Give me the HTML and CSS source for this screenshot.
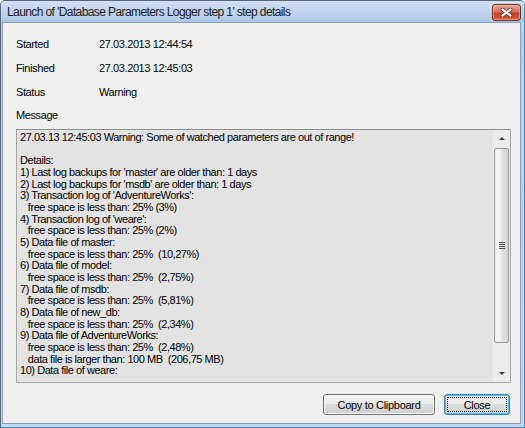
FILE: index.html
```html
<!DOCTYPE html>
<html lang="en">
<head>
    <meta charset="UTF-8">
    <title>Step details</title>
    <link rel="stylesheet" href="styles.css">
</head>
<body>
    <div class="window">
        <div class="titlebar">
            <span class="title">Launch of 'Database Parameters Logger step 1' step details</span>
            <button class="close-x" aria-label="Close">
                <svg width="13" height="9" viewBox="0 0 13 9">
                    <path d="M2.5 1.5 L10.5 7.5 M10.5 1.5 L2.5 7.5" stroke="#5a1a10" stroke-width="3.6" stroke-linecap="round"/>
                    <path d="M2.5 1.5 L10.5 7.5 M10.5 1.5 L2.5 7.5" stroke="#ffffff" stroke-width="2.2" stroke-linecap="round"/>
                </svg>
            </button>
        </div>
        <div class="client">
            <div class="fields">
                <span class="label">Started</span><span class="value">27.03.2013 12:44:54</span>
                <span class="label">Finished</span><span class="value">27.03.2013 12:45:03</span>
                <span class="label">Status</span><span class="value">Warning</span>
                <span class="label">Message</span><span class="value"></span>
            </div>
            <div class="memo">
                <div class="memo-text">27.03.13 12:45:03 Warning: Some of watched parameters are out of range!

Details:
1) Last log backups for 'master' are older than: 1 days
2) Last log backups for 'msdb' are older than: 1 days
3) Transaction log of 'AdventureWorks':
   free space is less than: 25% (3%)
4) Transaction log of 'weare':
   free space is less than: 25% (2%)
5) Data file of master:
   free space is less than: 25%  (10,27%)
6) Data file of model:
   free space is less than: 25%  (2,75%)
7) Data file of msdb:
   free space is less than: 25%  (5,81%)
8) Data file of new_db:
   free space is less than: 25%  (2,34%)
9) Data file of AdventureWorks:
   free space is less than: 25%  (2,48%)
   data file is larger than: 100 MB  (206,75 MB)
10) Data file of weare:</div>
                <div class="scrollbar">
                    <div class="arrow"><span class="tri up"></span></div>
                    <div class="track">
                        <div class="thumb"><span class="grip"></span></div>
                    </div>
                    <div class="arrow"><span class="tri down"></span></div>
                </div>
            </div>
            <div class="buttons">
                <button class="btn">Copy to Clipboard</button>
                <button class="btn default"><span class="focus">Close</span></button>
            </div>
        </div>
    </div>
</body>
</html>
```

FILE: styles.css
```css
body {
    margin: 0;
    padding: 0;
    background-color: #ffffff;
    font-family: 'Liberation Sans', Arial, sans-serif;
    font-size: 11px;
    color: #000000;
}
.window {
    width: 525px;
    height: 428px;
    box-sizing: border-box;
    display: flex;
    flex-direction: column;
    background: linear-gradient(#c9d9ee, #b9cde8 30px, #c6d7ee);
    border: 1px solid #56677f;
    border-right-color: #3a8fcd;
    border-bottom-color: #3a8fcd;
    border-radius: 5px 5px 0 0;
    padding: 0 3px 3px 1px;
}
.titlebar {
    height: 21px;
    display: flex;
    align-items: center;
    justify-content: space-between;
    padding: 0 3px 0 6px;
    background: linear-gradient(#d2e0f2, #aec7e7);
    margin: 0 -3px 0 -1px;
    border-radius: 4px 4px 0 0;
}
.title {
    font-family: 'Liberation Sans', Arial, sans-serif;
    font-size: 12px;
    letter-spacing: -0.6px;
    color: #1a1a1a;
    padding-top: 1px;
}
.close-x {
    width: 29px;
    height: 17px;
    margin-top: 2px;
    padding: 0;
    border: 1px solid #6b2e22;
    border-radius: 3px;
    background: linear-gradient(#e9a99a, #d2735e 45%, #c0432a 55%, #d35f3e);
    display: flex;
    align-items: center;
    justify-content: center;
    box-shadow: inset 0 0 0 1px rgba(255, 200, 180, 0.5);
}
.client {
    flex: 1;
    display: flex;
    flex-direction: column;
    background-color: #f0f0f0;
    border: 1px solid #8d9db5;
    padding: 10px 9px 8px 13px;
}
.fields {
    display: grid;
    grid-template-columns: 83px 1fr;
    grid-auto-rows: 23.6px;
    align-items: center;
}
.label, .value {
    font-size: 11px;
    letter-spacing: -0.4px;
    color: #000000;
}
.memo {
    margin-top: 2px;
    height: 254px;
    box-sizing: border-box;
    display: flex;
    border: 1px solid #a5a5a5;
    border-top-color: #8e8f8f;
    background-color: #e3e3e3;
}
.memo-text {
    flex: 1;
    overflow: hidden;
    white-space: pre;
    padding: 2px 3px;
    line-height: 11.67px;
    font-size: 11px;
    letter-spacing: -0.45px;
}
.scrollbar {
    width: 17px;
    display: flex;
    flex-direction: column;
    background-color: #ececec;
    border-left: 1px solid #e8e8e8;
}
.arrow {
    height: 17px;
    display: flex;
    align-items: center;
    justify-content: center;
}
.tri {
    width: 0;
    height: 0;
    border-left: 3px solid transparent;
    border-right: 3px solid transparent;
}
.tri.up {
    border-bottom: 3px solid #3c3c3c;
}
.tri.down {
    border-top: 3px solid #3c3c3c;
}
.track {
    flex: 1;
    padding: 1px 1px 0 1px;
}
.thumb {
    height: 195px;
    box-sizing: border-box;
    border: 1px solid #9a9a9a;
    border-radius: 2px;
    background: linear-gradient(to right, #eeeeee, #f7f7f7 30%, #e0e0e0 60%, #d2d2d2);
    display: flex;
    align-items: center;
    justify-content: center;
}
.grip {
    width: 6px;
    height: 7px;
    background: repeating-linear-gradient(#4f4f4f 0, #4f4f4f 1px, transparent 1px, transparent 2px);
}
.buttons {
    display: flex;
    justify-content: flex-end;
    gap: 9px;
    margin-top: 11px;
    padding-right: 1px;
}
.btn {
    height: 21px;
    box-sizing: border-box;
    font-family: 'Liberation Sans', Arial, sans-serif;
    font-size: 11px;
    letter-spacing: -0.3px;
    color: #000000;
    border: 1px solid #707070;
    border-radius: 3px;
    background: linear-gradient(#f2f2f2, #ebebeb 50%, #dddddd 50%, #cfcfcf);
    box-shadow: inset 0 0 0 1px #fbfbfb;
    padding: 0;
    width: 112px;
}
.btn.default {
    width: 66px;
    border-color: #3c7fb1;
    box-shadow: inset 0 0 0 1px #48c4f5;
    padding: 2px;
}
.focus {
    display: flex;
    align-items: center;
    justify-content: center;
    height: 100%;
    box-sizing: border-box;
    border: 1px dotted #000000;
}
```
